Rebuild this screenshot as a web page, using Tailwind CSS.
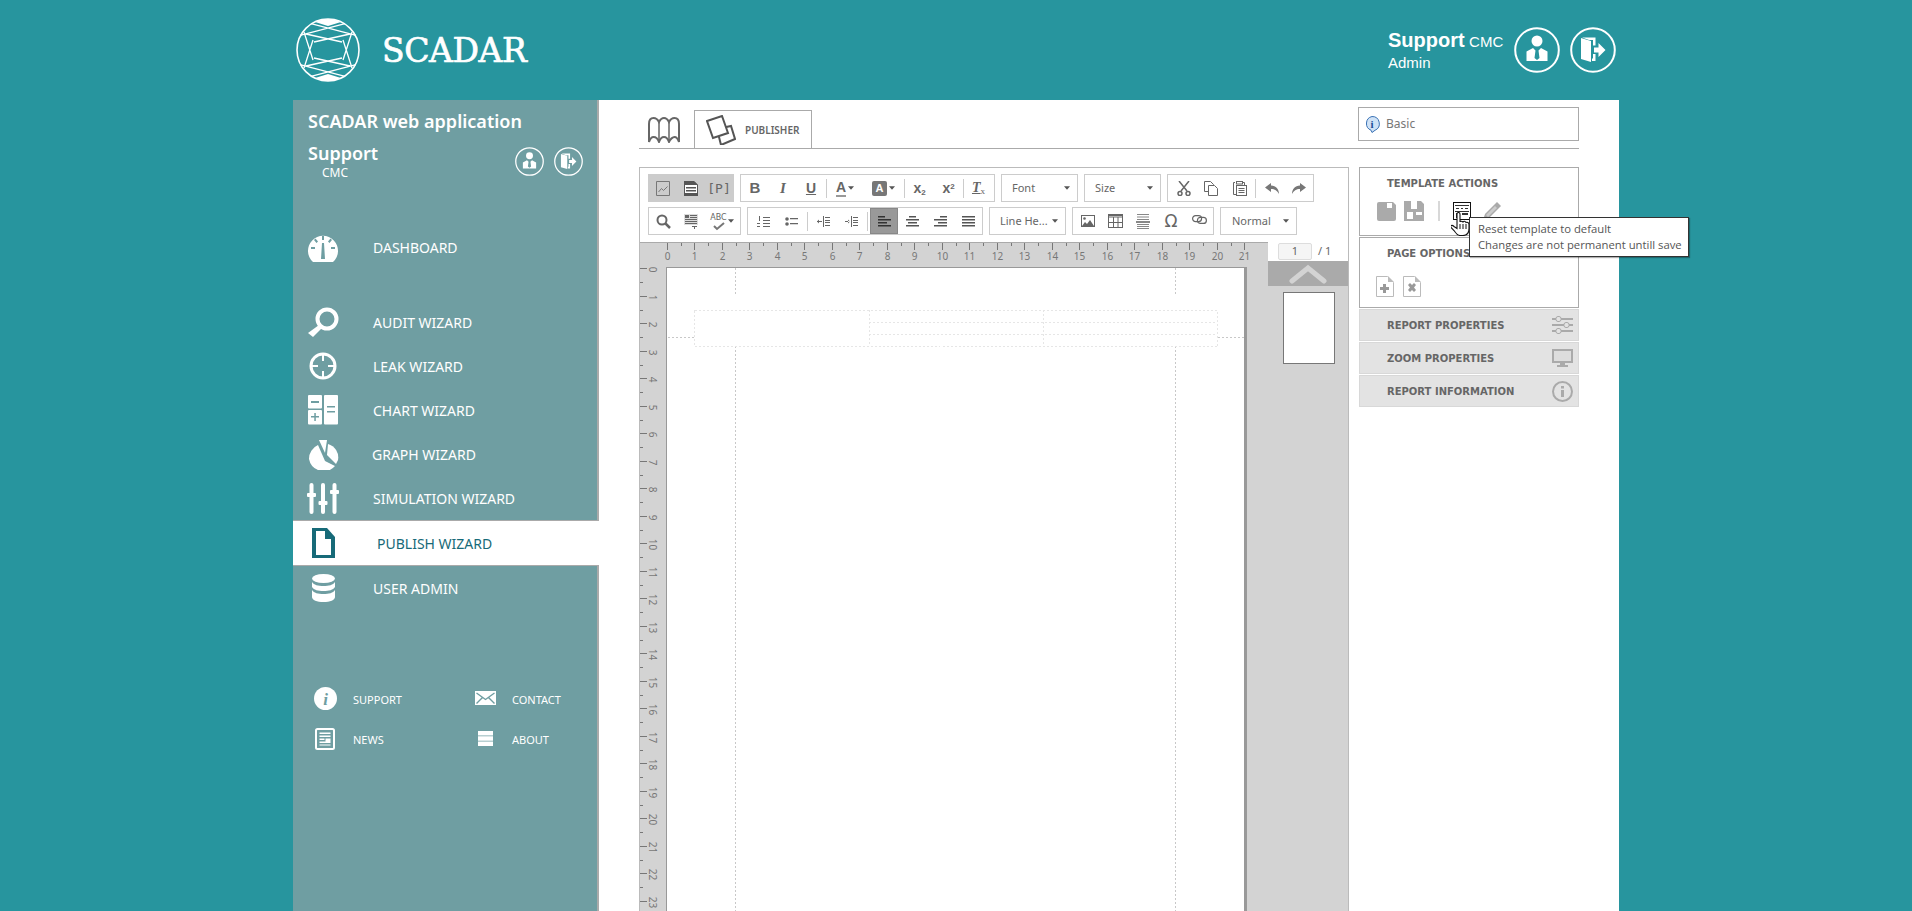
<!DOCTYPE html>
<html lang="en">
<head>
<meta charset="UTF-8">
<title>SCADAR web application</title>
<script src="https://cdn.jsdelivr.net/npm/@tailwindcss/browser@4"></script>
</head>
<body class="bg-[#27959e] h-[911px] overflow-hidden font-['Noto_Sans',sans-serif]">
<svg class="hidden">
  <symbol id="i-user" viewBox="0 0 46 46">
    <circle cx="23" cy="23" r="21.8" fill="none" stroke="#fff" stroke-width="2"/>
    <circle cx="23" cy="14" r="5.500" fill="#fff"/>
    <path d="M12.500 34V24.500L19 21l2.500 2.500-1 7.500 2.500 2 2.500-2-1-7.500L27 21l6.500 3.500V34z" fill="#fff"/>
  </symbol>
  <symbol id="i-exit" viewBox="0 0 46 46">
    <circle cx="23" cy="23" r="21.800" fill="none" stroke="#fff" stroke-width="2"/>
    <path d="M11 11l10 3v21l-10-3z" fill="#fff"/>
    <path d="M12 10.500h13.500v8h-2.500v-5.500h-4zM23 27h2.500v7H22v-2.500h1z" fill="#fff"/>
    <path d="M24 20.500h4.500v-4.500l7 7-7 7v-4.500H24z" fill="#fff"/>
  </symbol>
  <symbol id="caret" viewBox="0 0 7 4"><path d="M0 0h7L3.500 4z" fill="#555"/></symbol>
</svg>

<div class="w-[1326px] mx-auto">
  <header class="h-[100px] flex items-center justify-between">
    <div class="flex items-center pl-[3px]">
      <svg class="w-[64px] h-[64px]" viewBox="0 0 64 64" fill="none" stroke="#fff" stroke-width="1.300">
        <circle cx="32" cy="32" r="31" stroke-width="1.600"/>
        <path d="M19 4A31 31 0 0 1 45 4L32 8zM19 60A31 31 0 0 0 45 60L32 56z" fill="#fff" stroke="none"/>
        <path d="M4 17.300L49 5.700M15 5.700L60 17.300M10 16l36 8M54 16l-36 8M4 46.700L49 58.300M15 58.300L60 46.700M10 48l36-8M54 48l-36-8M17 22L8 50M8 14l9 28M47 22l9 28M56 14l-9 28"/>
      </svg>
      <span class="ml-[22px] text-[33px] leading-none text-white font-['DejaVu_Serif',serif] tracking-[-0.4px] [-webkit-text-stroke:0.7px_white]">SCADAR</span>
    </div>
    <div class="flex items-center pr-[3px]">
      <div class="text-white font-['Liberation_Sans',sans-serif] mr-[8px] w-[118px] -mt-[1px]">
        <div class="leading-[24px] whitespace-nowrap"><span class="text-[20px] font-bold">Support</span> <span class="text-[15px]">CMC</span></div>
        <div class="text-[15px] leading-[18px]">Admin</div>
      </div>
      <svg class="w-[46px] h-[46px]"><use href="#i-user"/></svg>
      <svg class="w-[46px] h-[46px] ml-[10px]"><use href="#i-exit"/></svg>
    </div>
  </header>

  <div class="flex h-[811px]">
    <aside class="w-[306px] shrink-0 bg-[#6f9ea2] border-r-2 border-[#aaaaaa] text-white">
      <div class="h-[126px] pl-[15px] pt-[8px] relative">
        <div class="text-[18px] leading-[26px] font-semibold whitespace-nowrap">SCADAR web application</div>
        <div class="flex mt-[7px]">
          <div class="w-[207px]">
            <div class="text-[18px] leading-[24px] font-semibold">Support</div>
            <div class="text-[12px] leading-[14px] pl-[14px] pt-[1px]">CMC</div>
          </div>
          <svg class="w-[29px] h-[29px] mt-[6px]"><use href="#i-user"/></svg>
          <svg class="w-[29px] h-[29px] mt-[6px] ml-[10px]"><use href="#i-exit"/></svg>
        </div>
      </div>

      <nav class="text-[14px]">
        <a class="h-11 flex items-center pl-[13px]">
          <span class="w-[34px] flex justify-center">
            <svg class="w-[32px] h-[30px]" viewBox="0 0 32 30"><path d="M6 29a15 15 0 1 1 20 0z" fill="#fff"/><path d="M15 3h2v4h-2zM7 7l1.500-1.500 2.500 3-1.500 1.500zM25 7l-1.500-1.500-2.500 3 1.500 1.500zM4 14h4v2H4zM24 14h4v2h-4zM15 10l2 0 1 16h-4z" fill="#6f9ea2"/></svg>
          </span>
          <span class="ml-[33px] -mt-[1px]">DASHBOARD</span>
        </a>
        <div class="h-[30px]"></div>
        <a class="h-11 flex items-center pl-[13px]">
          <span class="w-[34px] flex justify-center">
            <svg class="w-[31px] h-[31px]" viewBox="0 0 31 31"><circle cx="19" cy="12" r="9.500" fill="none" stroke="#fff" stroke-width="4"/><path d="M11 18l3 3-9 9-5-4z" fill="#fff"/></svg>
          </span>
          <span class="ml-[33px]">AUDIT WIZARD</span>
        </a>
        <a class="h-11 flex items-center pl-[13px]">
          <span class="w-[34px] flex justify-center">
            <svg class="w-[28px] h-[28px]" viewBox="0 0 28 28" fill="none" stroke="#fff"><circle cx="14" cy="14" r="12" stroke-width="3"/><path d="M14 3v6M14 19v6M3 14h6M19 14h6" stroke-width="2"/></svg>
          </span>
          <span class="ml-[33px]">LEAK WIZARD</span>
        </a>
        <a class="h-11 flex items-center pl-[13px]">
          <span class="w-[34px] flex justify-center">
            <svg class="w-[30px] h-[30px]" viewBox="0 0 30 30"><rect width="14" height="13.500" rx="1" fill="#fff"/><rect y="15" width="14" height="14.500" rx="1" fill="#fff"/><rect x="16" width="14" height="29.500" rx="1" fill="#fff"/><path d="M3 6h8v2H3zM3 21h8v1.500H3zM6.300 18h1.500v8H6.300zM19 11h8v1.500h-8zM19 16h8v1.500h-8z" fill="#6f9ea2"/></svg>
          </span>
          <span class="ml-[33px]">CHART WIZARD</span>
        </a>
        <a class="h-11 flex items-center pl-[13px]">
          <span class="w-[34px] flex justify-center">
            <svg class="w-[31px] h-[31px]" viewBox="0 0 31 31" fill="#fff"><path d="M10 6l7 16 10 5A15 15 0 0 1 1 20 15 15 0 0 1 10 6z"/><path d="M11 1h8l-2 13z"/><path d="M20 5a14 14 0 0 1 10 16l-2 4-9-9z"/></svg>
          </span>
          <span class="ml-[32px]">GRAPH WIZARD</span>
        </a>
        <a class="h-11 flex items-center pl-[13px]">
          <span class="w-[34px] flex justify-center">
            <svg class="w-[32px] h-[31px]" viewBox="0 0 32 31" fill="#fff"><rect x="2.500" width="4" height="31" rx="2"/><rect x="0" y="10" width="9" height="4" rx="1"/><rect x="14" y="0" width="4" height="31" rx="2"/><rect x="11.500" y="18" width="9" height="4" rx="1"/><rect x="25.500" y="0" width="4" height="31" rx="2"/><rect x="23" y="7" width="9" height="4" rx="1"/></svg>
          </span>
          <span class="ml-[33px]">SIMULATION WIZARD</span>
        </a>
        <a class="h-[46px] -mr-[2px] relative flex items-center pl-[13px] bg-white text-[#176a78] border-y-[1px] border-[#aaaaaa]">
          <span class="w-[34px] flex justify-center">
            <svg class="w-[23px] h-[30px]" viewBox="0 0 23 30"><path d="M0 0h15l8 9v21H0z" fill="#176a78"/><path d="M4 3h9v8h6v16H4z" fill="#fff"/></svg>
          </span>
          <span class="ml-[37px]">PUBLISH WIZARD</span>
        </a>
        <a class="h-11 flex items-center pl-[13px]">
          <span class="w-[34px] flex justify-center">
            <svg class="w-[23px] h-[28px]" viewBox="0 0 23 28" fill="#fff"><ellipse cx="11.500" cy="4.500" rx="11.500" ry="4.500"/><path d="M0 8c2 3 6 4 11.500 4S21 11 23 8v5c-2 3-6 4-11.500 4S2 16 0 13z"/><path d="M0 16c2 3 6 4 11.500 4S21 19 23 16v7c0 3-5 5-11.500 5S0 26 0 23z"/></svg>
          </span>
          <span class="ml-[33px]">USER ADMIN</span>
        </a>
      </nav>

      <div class="grid grid-cols-[160px_120px] ml-[19px] mt-[70px] text-[11px]">
        <a class="h-10 flex items-center">
          <span class="w-[26px] flex justify-center">
            <svg class="w-[23px] h-[23px] -mt-[3px]" viewBox="0 0 23 23"><circle cx="11.500" cy="11.500" r="11.500" fill="#fff"/><text x="11.500" y="17.500" text-anchor="middle" font-family="Liberation Serif" font-style="italic" font-weight="700" font-size="17" fill="#6f9ea2">i</text></svg>
          </span>
          <span class="ml-[15px]">SUPPORT</span>
        </a>
        <a class="h-10 flex items-center">
          <span class="w-[26px] flex justify-center">
            <svg class="w-[21px] h-[14px] -mt-[4px]" viewBox="0 0 21 14"><rect width="21" height="14" fill="#fff"/><path d="M1.500 2L10.500 8.500 19.500 2M1.500 12.500L7.500 6.500M19.500 12.500L13.500 6.500" fill="none" stroke="#6f9ea2" stroke-width="1.400"/></svg>
          </span>
          <span class="ml-[14px]">CONTACT</span>
        </a>
        <a class="h-10 flex items-center">
          <span class="w-[26px] flex justify-center">
            <svg class="w-[20px] h-[22px] -mt-[2px]" viewBox="0 0 20 22"><rect x="1" y="1" width="18" height="20" rx="1.500" fill="none" stroke="#fff" stroke-width="2"/><path d="M4.500 4.500h11v1.500h-11zM4.500 7.500h11v1.500h-11zM4.500 10.500h5v1.500h-5zM10.500 10.500h5v3h-5zM4.500 13.500h11v1.500h-11zM4.500 16.500h11v1h-11z" fill="#fff"/></svg>
          </span>
          <span class="ml-[15px]">NEWS</span>
        </a>
        <a class="h-10 flex items-center">
          <span class="w-[26px] flex justify-center">
            <svg class="w-[15px] h-[15px] -mt-[3px]" viewBox="0 0 15 15" fill="#fff"><path d="M0 0h15v4.500H0zM0 5.300h15v4.400H0zM0 10.500h15V15H0z"/></svg>
          </span>
          <span class="ml-[14px]">ABOUT</span>
        </a>
      </div>
    </aside>

    <main class="w-[1020px] bg-white pl-[40px] pr-[40px]">
      <div class="h-[49px] w-[940px] border-b border-[#aaaaaa] flex relative">
        <div class="w-[55px] pt-[17px] pl-[9px]">
          <svg class="w-[32px] h-[26px]" viewBox="0 0 32 26" fill="none" stroke="#666" stroke-width="2"><path d="M1 7C1 3 3 1 5.500 1S10 3 11 5c1-2 2.500-4 5-4s4 2 5 4c1-2 3-4 5.500-4S31 3 31 7v18c-1-3-3-5-4.500-5S22 22 21 25c-1-3-3-5-5-5s-4 2-5 5c-1-3-3-5-5.500-5S2 22 1 25z"/><path d="M11 5v20M21 5v20" stroke-width="1.500"/></svg>
        </div>
        <div class="mt-[10px] w-[118px] h-[39px] border border-b-0 border-[#aaaaaa] flex items-center pl-[11px]">
          <svg class="w-[30px] h-[30px]" viewBox="0 0 30 30" fill="#fff" stroke="#555" stroke-width="2"><path d="M11 14l14-3 4 13-14 6z"/><path d="M1 6l15-5 6 17-15 5z"/></svg>
          <span class="ml-[9px] text-[10px] font-semibold text-[#666666]">PUBLISHER</span>
        </div>
        <div class="absolute right-0 top-[7px] w-[221px] h-[34px] border border-[#aaaaaa] flex items-center pl-[5px]">
          <svg class="w-[16px] h-[17px]" viewBox="0 0 16 17"><path d="M8 .5a7.200 7.200 0 0 1 3 13.800L8 16.500l-1-2.300A7.200 7.200 0 0 1 8 .5z" fill="#cfe2f6" stroke="#3a72b5"/><text x="8" y="12" text-anchor="middle" font-family="Liberation Serif" font-weight="700" font-size="11" fill="#1d4f96">i</text></svg>
          <span class="ml-[6px] text-[12px] text-[#777777]">Basic</span>
        </div>
      </div>

      <div class="flex mt-[18px] w-[940px]">
        <div class="w-[710px] h-[760px] border border-[#bbbbbb]">
          <div class="h-[74px] pl-[8px] pt-[6px] text-[#666666]">
            <div class="flex h-[28px]">
              <div class="flex bg-[#cccccc] px-[1px] items-center">
                <span class="w-7 flex justify-center"><svg class="w-[14px] h-[15px]" viewBox="0 0 14 15" fill="none" stroke="#777"><path d="M.5.5h13v14H.5z"/><path d="M2.500 11l3-3.500 2 2 4-4" /></svg></span>
                <span class="w-7 flex justify-center"><svg class="w-[14px] h-[15px]" viewBox="0 0 14 15"><path d="M.5.500h9.500l3.500 3.500v10.500H.5z" fill="#fff" stroke="#555"/><path d="M0 0h10l4 4H0zM2 6h10v1.500H2zM2 9h10v1.500H2zM0 12h14v3H0z" fill="#555"/></svg></span>
                <span class="w-7 text-center text-[13px] leading-none font-['DejaVu_Sans_Mono',monospace]">[P]</span>
              </div>
              <div class="flex ml-[6px] w-[255px] border border-[#cccccc] items-center font-['Liberation_Sans',sans-serif]">
                <span class="w-7 text-center text-[15px] font-bold">B</span>
                <span class="w-7 text-center text-[15px] font-bold italic font-['Liberation_Serif',serif]">I</span>
                <span class="w-7 text-center text-[14px] font-bold underline">U</span>
                <span class="w-[1px] h-[19px] bg-[#cccccc] ml-[1px]"></span>
                <span class="w-[34px] flex items-center justify-center ml-[1px]"><span class="text-[14px] font-bold border-b-2 border-[#999999] leading-[15px]">A</span><svg class="w-[6px] h-[4px] ml-[2px]"><use href="#caret"/></svg></span>
                <span class="w-[41px] flex items-center justify-center ml-[1px]"><span class="w-[15px] h-[15px] bg-[#777777] rounded-[2px] text-white text-[11px] font-bold leading-[15px] text-center">A</span><svg class="w-[6px] h-[4px] ml-[2px]"><use href="#caret"/></svg></span>
                <span class="w-[1px] h-[19px] bg-[#cccccc]"></span>
                <span class="w-[29px] text-center text-[14px] font-bold leading-none">x<sub class="text-[8px]">2</sub></span>
                <span class="w-[29px] text-center text-[14px] font-bold leading-none">x<sup class="text-[8px]">2</sup></span>
                <span class="w-[1px] h-[19px] bg-[#cccccc]"></span>
                <span class="w-[29px] text-center text-[14px] font-bold italic underline leading-none font-['Liberation_Serif',serif]">T<sub class="text-[9px] not-italic font-normal">x</sub></span>
              </div>
              <div class="ml-[6px] w-[77px] border border-[#cccccc] flex items-center justify-between pl-[10px] pr-[7px] text-[11px] text-[#666666]">Font<svg class="w-[6px] h-[4px]"><use href="#caret"/></svg></div>
              <div class="ml-[6px] w-[77px] border border-[#cccccc] flex items-center justify-between pl-[10px] pr-[7px] text-[11px] text-[#666666]">Size<svg class="w-[6px] h-[4px]"><use href="#caret"/></svg></div>
              <div class="ml-[6px] w-[147px] border border-[#cccccc] flex items-center pl-[2px]">
                <span class="w-7 flex justify-center"><svg class="w-[14px] h-[15px]" viewBox="0 0 14 15" fill="none" stroke="#666" stroke-width="1.500"><path d="M2 0l8 10M12 0L4 10"/><circle cx="3" cy="12.500" r="2"/><circle cx="11" cy="12.500" r="2"/></svg></span>
                <span class="w-7 flex justify-center"><svg class="w-[14px] h-[15px]" viewBox="0 0 14 15" fill="#fff" stroke="#666"><path d="M.5.5h6l3 3v7H.5z"/><path d="M4.500 4.500h6l3 3v7h-9z"/></svg></span>
                <span class="w-[30px] flex justify-center"><svg class="w-[14px] h-[15px]" viewBox="0 0 14 15" fill="#fff" stroke="#666"><path d="M2 1.500H.5v12h3M10 1.500h1.500v3"/><rect x="3.500" y=".5" width="6" height="2.500"/><rect x="3.500" y="4.500" width="10" height="10"/><path d="M5.500 7.500h6M5.500 9.500h6M5.500 11.500h6"/></svg></span>
                <span class="w-[1px] h-[19px] bg-[#cccccc]"></span>
                <span class="w-7 flex justify-center ml-[2px]"><svg class="w-[14px] h-[11px]" viewBox="0 0 14 11" fill="#777"><path d="M6 0L0 4.500 6 9V6c4 0 6 1.500 8 5 0-5-3-8-8-8.500z"/></svg></span>
                <span class="w-7 flex justify-center"><svg class="w-[14px] h-[11px]" viewBox="0 0 14 11" fill="#777"><path d="M8 0l6 4.500L8 9V6c-4 0-6 1.500-8 5 0-5 3-8 8-8.500z"/></svg></span>
              </div>
            </div>
            <div class="flex h-[28px] mt-[5px]">
              <div class="flex w-[93px] border border-[#cccccc] items-center">
                <span class="w-7 flex justify-center"><svg class="w-[15px] h-[15px]" viewBox="0 0 15 15" fill="none" stroke="#666" stroke-width="2"><circle cx="6" cy="6" r="4.500"/><path d="M9.500 9.500L14 14" stroke-width="2.500"/></svg></span>
                <span class="w-7 flex justify-center"><svg class="w-[14px] h-[15px]" viewBox="0 0 14 15"><rect width="14" height="11" fill="#ddd"/><path d="M1 1h4v3H1zM6 1h7v1H6zM6 3h7v1H6zM1 5h12v1H1zM1 7h12v1H1zM1 9h12v1H1zM8 12h5v1H8zM10 12h1v3h-1z" fill="#666"/></svg></span>
                <span class="w-[34px] flex items-center justify-center relative">
                  <span class="text-[8px] font-['DejaVu_Sans',sans-serif] leading-none relative -top-[3px]">ABC</span>
                  <svg class="absolute left-[7px] top-[5px] w-[14px] h-[9px]" viewBox="0 0 14 9" fill="none" stroke="#777" stroke-width="2"><path d="M2 4l3 3 7-6"/></svg>
                  <svg class="w-[6px] h-[4px] ml-[1px]"><use href="#caret"/></svg>
                </span>
              </div>
              <div class="flex ml-[6px] w-[236px] border border-[#cccccc] items-center">
                <span class="w-7 flex justify-center ml-[1px]"><svg class="w-[13px] h-[11px]" viewBox="0 0 13 11" fill="#666"><path d="M6 1h7v1H6zM6 4h7v1H6zM6 7h7v1H6zM6 10h7v1H6zM2 0h1v5H2zM0 7h3v1H0zM0 10h3v1H0z"/></svg></span>
                <span class="w-7 flex justify-center"><svg class="w-[13px] h-[9px]" viewBox="0 0 13 9" fill="#666"><circle cx="2" cy="2" r="1.800"/><circle cx="2" cy="7" r="1.800"/><path d="M5 1h8v1.300H5zM5 6h8v1.300H5z"/></svg></span>
                <span class="w-[1px] h-[19px] bg-[#cccccc] ml-[2px] mr-[1px]"></span>
                <span class="w-7 flex justify-center"><svg class="w-[13px] h-[11px]" viewBox="0 0 13 11" fill="#666"><path d="M6 0h1v11H6zM8 1h5v1H8zM8 4h5v1H8zM8 6h5v1H8zM8 9h5v1H8zM0 5h5v1H0zM0 5.500l2-2v4z"/></svg></span>
                <span class="w-7 flex justify-center"><svg class="w-[13px] h-[11px]" viewBox="0 0 13 11" fill="#666"><path d="M6 0h1v11H6zM8 1h5v1H8zM8 4h5v1H8zM8 6h5v1H8zM8 9h5v1H8zM0 5h5v1H0zM5 5.500l-2-2v4z"/></svg></span>
                <span class="w-[1px] h-[19px] bg-[#cccccc] ml-[2px] mr-[2px]"></span>
                <span class="w-7 h-[26px] bg-[#999999] border border-[#888888] flex justify-center items-center"><svg class="w-[13px] h-[11px]" viewBox="0 0 13 11" fill="#333"><path d="M0 0h7v1.500H0zM0 3h13v1.500H0zM0 6h9v1.500H0zM0 9h13v1.500H0z"/></svg></span>
                <span class="w-7 flex justify-center"><svg class="w-[13px] h-[11px]" viewBox="0 0 13 11" fill="#555"><path d="M3 0h7v1.500H3zM0 3h13v1.500H0zM2 6h9v1.500H2zM0 9h13v1.500H0z"/></svg></span>
                <span class="w-7 flex justify-center"><svg class="w-[13px] h-[11px]" viewBox="0 0 13 11" fill="#555"><path d="M6 0h7v1.500H6zM0 3h13v1.500H0zM4 6h9v1.500H4zM0 9h13v1.500H0z"/></svg></span>
                <span class="w-7 flex justify-center"><svg class="w-[13px] h-[11px]" viewBox="0 0 13 11" fill="#555"><path d="M0 0h13v1.500H0zM0 3h13v1.500H0zM0 6h13v1.500H0zM0 9h13v1.500H0z"/></svg></span>
              </div>
              <div class="ml-[6px] w-[77px] border border-[#cccccc] flex items-center justify-between pl-[10px] pr-[7px] text-[11px] text-[#666666] whitespace-nowrap">Line He...<svg class="w-[6px] h-[4px]"><use href="#caret"/></svg></div>
              <div class="ml-[6px] w-[142px] border border-[#cccccc] flex items-center pl-[1px]">
                <span class="w-7 flex justify-center"><svg class="w-[14px] h-[12px]" viewBox="0 0 14 12"><rect x=".5" y=".5" width="13" height="11" fill="#fff" stroke="#666"/><circle cx="3.500" cy="3.500" r="1.300" fill="#666"/><path d="M1 11l3-4 2 2 3-4 4 6z" fill="#666"/></svg></span>
                <span class="w-7 flex justify-center"><svg class="w-[15px] h-[14px]" viewBox="0 0 15 14" fill="none" stroke="#666"><rect x=".5" y=".5" width="14" height="13"/><path d="M0 1.500h15M0 3h15M.5 8.500h14M5.500 3v11M10 3v11"/></svg></span>
                <span class="w-7 flex justify-center"><svg class="w-[14px] h-[15px]" viewBox="0 0 14 15" fill="#888"><path d="M1 0h12v1H1zM1 2.500h12v1H1zM1 5h12v1H1zM0 7h14v2H0z"/><path d="M1 10h12v1H1zM1 12h12v1H1zM1 14h12v1H1z"/></svg></span>
                <span class="w-[30px] text-center text-[17px] leading-none font-['DejaVu_Sans',sans-serif]">Ω</span>
                <span class="w-7 flex justify-center"><svg class="w-[15px] h-[9px] -mt-[3px]" viewBox="0 0 15 9" fill="none" stroke="#666" stroke-width="1.200"><rect x=".6" y=".6" width="9" height="6" rx="3"/><rect x="5.400" y="2.400" width="9" height="6" rx="3"/></svg></span>
              </div>
              <div class="ml-[6px] w-[77px] border border-[#cccccc] flex items-center justify-between pl-[11px] pr-[7px] text-[11px] text-[#666666]">Normal<svg class="w-[6px] h-[4px]"><use href="#caret"/></svg></div>
            </div>
          </div>

          <div class="flex h-[685px]">
            <div class="w-[628px] bg-[#d3d3d3] border-t border-[#aaaaaa]">
              <svg id="ruler_top" class="w-[628px] h-[25px] block" viewBox="0 0 628 25"></svg>
              <div class="flex">
                <svg id="ruler_left" class="w-[26px] h-[660px] block overflow-visible" viewBox="0 0 26 660"></svg>
                <div class="w-[581px] h-[661px] -mt-[1px] bg-white border-t border-l border-[#999999] border-r-[3px] border-r-[#999999]">
                  <svg class="w-[577px] h-[660px] block" viewBox="0 0 577 660" fill="none" stroke-dasharray="2 2" shape-rendering="crispEdges">
                    <path d="M68.500 0v28M508.500 0v28M68.500 78v582M508.500 78v582M1 69.500h27M551 69.500h26" stroke="#c8c8c8"/>
                    <path d="M27.500 42.500h523v36h-523zM202.500 42v36M376.500 42v36M202 54.500h348M202 66.500h348" stroke="#e6e6e6"/>
                  </svg>
                </div>
              </div>
            </div>
            <div class="w-[80px]">
              <div class="h-[19px] flex items-start pl-[10px] text-[11px] text-[#666666]">
                <span class="w-[34px] h-[17px] bg-[#f5f5f5] border border-[#dddddd] rounded-[2px] text-center leading-[14px] mt-[1px]">1</span>
                <span class="ml-[6px] leading-[18px]">/ 1</span>
              </div>
              <div class="h-[664px] bg-[#d3d3d3]">
                <div class="h-[25px] bg-[#aaaaaa] flex justify-center items-center">
                  <svg class="w-[38px] h-[20px]" viewBox="0 0 38 20" fill="none" stroke="#d3d3d3" stroke-width="5" stroke-linecap="round"><path d="M3 17L19 4l16 13"/></svg>
                </div>
                <div class="ml-[15px] mt-[6px] w-[52px] h-[72px] bg-white border border-[#777777]"></div>
              </div>
            </div>
          </div>
        </div>

        <div class="ml-[10px] w-[220px] text-[10px] font-bold text-[#666666] font-['DejaVu_Sans',sans-serif]">
          <div class="h-[69px] border border-[#aaaaaa] pl-[17px] pt-[10px] relative">
            <div class="leading-[12px] ml-[10px]">TEMPLATE ACTIONS</div>
            <div class="flex items-center mt-[10px] h-[22px]">
              <svg class="w-[19px] h-[19px]" viewBox="0 0 19 19"><path d="M2 0h14l3 3v14a2 2 0 0 1-2 2H2a2 2 0 0 1-2-2V2a2 2 0 0 1 2-2z" fill="#aaa"/><path d="M10 1h5v5h-5z" fill="#fff"/></svg>
              <svg class="w-[20px] h-[20px] ml-[8px]" viewBox="0 0 20 20"><path d="M0 0h7v8h6V0h4l3 3v17H0z" fill="#aaa"/><path d="M8 1h4v5H8zM3 11h6v7H3zM12 14h6v-3h-6z" fill="#fff"/></svg>
              <span class="w-[2px] h-[20px] bg-[#d8d8d8] ml-[14px]"></span>
              <svg class="w-[18px] h-[18px] ml-[13px]" viewBox="0 0 18 18"><rect x=".5" y=".5" width="17" height="17" fill="#fff" stroke="#111"/><path d="M2 3h14v1H2zM3 6h3v1H3zM8 6h2v1H8zM12 6h3v1h-3zM2 9h14v1H2zM3 11h4v5H3zM9 11h6v2H9z" fill="#333"/></svg>
              <svg class="w-[20px] h-[20px] ml-[11px]" viewBox="0 0 20 20"><path d="M15 1l4 4L7 17l-6 2 2-6z" fill="#aaa"/><path d="M13 5l2 2-9 9-2-2z" fill="#ccc"/></svg>
            </div>
            <svg class="absolute left-[91px] top-[44px] w-[20px] h-[24px] z-10" viewBox="0 0 20 24"><path d="M6 2c0-2 3-2 3 0v8c0-1 2-1 3 0 1-1 2-1 3 .5 1-.5 3 0 3 2v4c0 4-2 7-6 7H9c-3 0-4-2-6-5l-3-3c-1-2 1-3 3-1l3 2z" fill="#fff" stroke="#111" stroke-width="1.100"/><path d="M9 12v5M12 12v5M15 12v5" stroke="#111"/></svg>
            <div class="absolute left-[109px] top-[49px] z-20 w-[220px] h-[40px] bg-white border border-[#333333] pl-[8px] pt-[3px] text-[11.3px] leading-[16px] font-normal text-[#555555] font-['Open_Sans',sans-serif] whitespace-nowrap shadow-[1px_1px_1px_rgba(0,0,0,0.3)]">
              Reset template to default<br>Changes are not permanent untill save
            </div>
          </div>
          <div class="h-[71px] border border-[#aaaaaa] mt-[1px] pl-[16px] pt-[10px]">
            <div class="leading-[12px] ml-[11px]">PAGE OPTIONS</div>
            <div class="flex mt-[16px]">
              <svg class="w-[18px] h-[21px]" viewBox="0 0 18 21"><path d="M.5.500h11l6 6v14H.5z" fill="#fff" stroke="#bbb"/><path d="M7 8h3v3h3v3h-3v3H7v-3H4v-3h3z" fill="#999"/><path d="M12 0l6 6h-6z" fill="#bbb"/></svg>
              <svg class="w-[18px] h-[21px] ml-[9px]" viewBox="0 0 18 21"><path d="M.5.500h11l6 6v14H.5z" fill="#fff" stroke="#bbb"/><path d="M5 9l2-2 2 2 2-2 2 2-2 2.500 2 2.500-2 2-2-2-2 2-2-2 2-2.500z" fill="#999"/><path d="M12 0l6 6h-6z" fill="#bbb"/></svg>
            </div>
          </div>
          <div class="h-[32px] mt-[1px] bg-[#e3e3e3] border border-[#d8d8d8] pl-[27px] pr-[5px] flex items-center justify-between">
            REPORT PROPERTIES
            <svg class="w-[21px] h-[18px]" viewBox="0 0 21 18" fill="#aaa"><path d="M0 2h21v2H0zM0 8h21v2H0zM0 14h21v2H0z"/><rect x="4" y=".5" width="5" height="5" rx="2" fill="#e3e3e3" stroke="#aaa"/><rect x="12" y="6.500" width="5" height="5" rx="2" fill="#e3e3e3" stroke="#aaa"/><rect x="4" y="12.500" width="5" height="5" rx="2" fill="#e3e3e3" stroke="#aaa"/></svg>
          </div>
          <div class="h-[32px] mt-[1px] bg-[#e3e3e3] border border-[#d8d8d8] pl-[27px] pr-[5px] flex items-center justify-between">
            ZOOM PROPERTIES
            <svg class="w-[21px] h-[18px]" viewBox="0 0 21 18"><rect x="1" y="1" width="19" height="12" fill="#ddd" stroke="#aaa" stroke-width="2"/><path d="M8 14h5v2h3v2H5v-2h3z" fill="#aaa"/></svg>
          </div>
          <div class="h-[32px] mt-[1px] bg-[#e3e3e3] border border-[#d8d8d8] pl-[27px] pr-[5px] flex items-center justify-between">
            REPORT INFORMATION
            <svg class="w-[21px] h-[21px]" viewBox="0 0 21 21"><circle cx="10.500" cy="10.500" r="9.500" fill="none" stroke="#aaa" stroke-width="2"/><path d="M9 9h3v7H9zM9 5h3v2.500H9z" fill="#aaa"/></svg>
          </div>
        </div>
      </div>
    </main>
  </div>
</div>

<script>
    // ruler ticks and numbers, 27.5px per cm
    const NS = 'http://www.w3.org/2000/svg';
    const STEP = 27.5;

    function addLine(svg, x1, y1, x2, y2) {
        const line = document.createElementNS(NS, 'line');
        line.setAttribute('x1', x1);
        line.setAttribute('y1', y1);
        line.setAttribute('x2', x2);
        line.setAttribute('y2', y2);
        line.setAttribute('stroke', '#777');
        line.setAttribute('shape-rendering', 'crispEdges');
        svg.appendChild(line);
    }

    function addLabel(svg, x, y, value, rotate) {
        const text = document.createElementNS(NS, 'text');
        text.setAttribute('x', x);
        text.setAttribute('y', y);
        text.setAttribute('text-anchor', 'middle');
        text.setAttribute('dominant-baseline', 'central');
        text.setAttribute('font-size', '10');
        text.setAttribute('font-family', 'Noto Sans');
        text.setAttribute('fill', '#777');
        if (rotate) text.setAttribute('transform', `rotate(90 ${x} ${y})`);
        text.textContent = value;
        svg.appendChild(text);
    }

    const top_ruler = document.getElementById('ruler_top');
    for (let i = 0; i <= 21; i++) {
        const x = Math.round(26.5 + i * STEP) + 0.5;
        addLine(top_ruler, x, 0, x, 7);
        addLabel(top_ruler, x, 13, i, false);
        if (i < 21) addLine(top_ruler, x + 14, 0, x + 14, 3);
    }

    const left_ruler = document.getElementById('ruler_left');
    for (let i = 0; i <= 23; i++) {
        const y = Math.round(i * STEP) + 0.5;
        addLine(left_ruler, 0, y, 7, y);
        addLabel(left_ruler, 13, y + 1, i, true);
        addLine(left_ruler, 0, y + 14, 3, y + 14);
    }
</script>
</body>
</html>
